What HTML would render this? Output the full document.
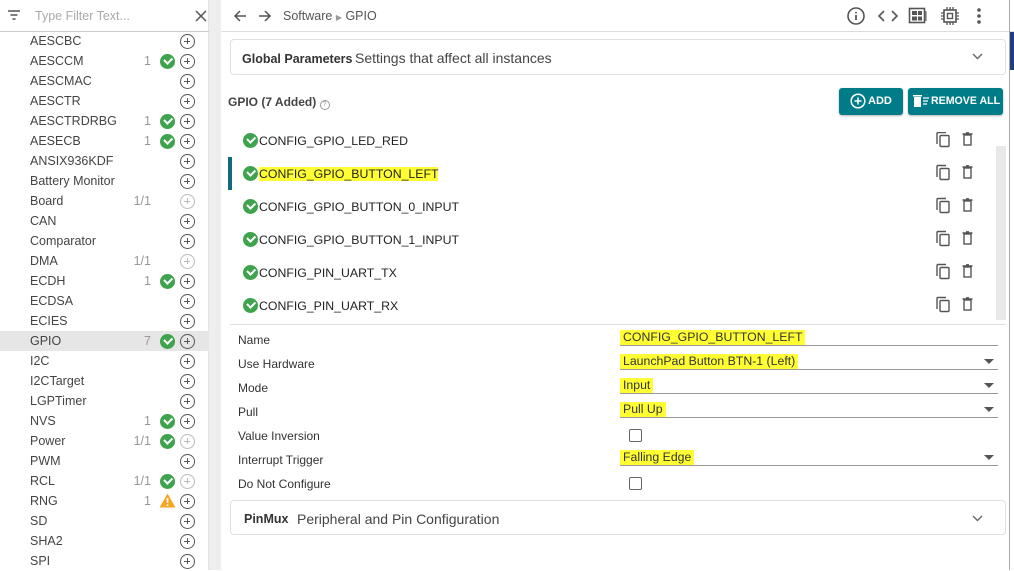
<!DOCTYPE html><html><head><style>
*{margin:0;padding:0;box-sizing:border-box}
body{width:1014px;height:570px;overflow:hidden;background:#fff;font-family:"Liberation Sans",sans-serif;position:relative;color:#333}
.a{position:absolute}
.sb{left:0;top:0;width:209px;height:570px;background:#fff;border-right:1px solid #e2e2e2}
.it{position:absolute;left:0;width:209px;height:20px;font-size:12.5px;color:#444}
.it span.n{position:absolute;left:30px;top:3px}
.it .c{position:absolute;right:58px;top:3px;color:#999;font-size:12.5px}
.ck{position:absolute;left:160px;top:3px;width:15px;height:15px;border-radius:50%;background:#3fa34d}
.ck:after{content:"";position:absolute;left:4px;top:3px;width:6px;height:3.5px;border-left:2px solid #fff;border-bottom:2px solid #fff;transform:rotate(-45deg)}
.pl{position:absolute;left:180px;top:3px;width:15px;height:15px;border-radius:50%;border:1.3px solid #555}
.pl:before{content:"";position:absolute;left:3px;top:5.5px;width:6px;height:1.3px;background:#555}
.pl:after{content:"";position:absolute;left:5.6px;top:3px;width:1.3px;height:6px;background:#555}
.pl.f{border-color:#bbb}.pl.f:before,.pl.f:after{background:#bbb}
.row{position:absolute;left:243px;font-size:12.3px;color:#222;height:16px}
.row .g{position:absolute;left:0;top:0;width:15px;height:15px;border-radius:50%;background:#3fa34d}
.row .g:after{content:"";position:absolute;left:4px;top:3px;width:6px;height:3.5px;border-left:2px solid #fff;border-bottom:2px solid #fff;transform:rotate(-45deg)}
.row .t{position:absolute;left:16px;top:1px;white-space:nowrap}
.hl{background:#ffff33}
.lb{position:absolute;left:238px;font-size:12px;color:#333}
.v{position:absolute;left:620px;width:378px;height:19px;border-bottom:1px solid #999;font-size:12.3px;color:#333}
.v span{background:#ffff33;padding:0 3px;line-height:15px;display:inline-block;margin-top:3px}
.v.d:after{content:"";position:absolute;right:4px;top:8px;border-left:5px solid transparent;border-right:5px solid transparent;border-top:5px solid #555}
.cb{position:absolute;left:629px;width:13px;height:13px;border:1.5px solid #666;border-radius:2px}
.ic{position:absolute}
</style></head><body>
<div class="a sb"></div>
<div class="a" style="left:209px;top:0;width:12px;height:570px;background:#eeeeee"></div>
<div class="a" style="left:0;top:31px;width:209px;height:1px;background:#ccc"></div>
<svg class="ic" style="left:6px;top:8px" width="16" height="14"><path d="M2 3h12M4.5 7h7M6.5 11h3" stroke="#555" stroke-width="1.5"/></svg>
<div class="a" style="left:35px;top:9px;font-size:12.5px;color:#aaa">Type Filter Text...</div>
<svg class="ic" style="left:195px;top:10px" width="12" height="12"><path d="M1 1L11 11M11 1L1 11" stroke="#555" stroke-width="1.5"/></svg>

<div class="it" style="top:31px"><span class="n">AESCBC</span><i class="pl"></i></div>
<div class="it" style="top:51px"><span class="n">AESCCM</span><span class="c">1</span><i class="ck"></i><i class="pl"></i></div>
<div class="it" style="top:71px"><span class="n">AESCMAC</span><i class="pl"></i></div>
<div class="it" style="top:91px"><span class="n">AESCTR</span><i class="pl"></i></div>
<div class="it" style="top:111px"><span class="n">AESCTRDRBG</span><span class="c">1</span><i class="ck"></i><i class="pl"></i></div>
<div class="it" style="top:131px"><span class="n">AESECB</span><span class="c">1</span><i class="ck"></i><i class="pl"></i></div>
<div class="it" style="top:151px"><span class="n">ANSIX936KDF</span><i class="pl"></i></div>
<div class="it" style="top:171px"><span class="n">Battery Monitor</span><i class="pl"></i></div>
<div class="it" style="top:191px"><span class="n">Board</span><span class="c">1/1</span><i class="pl f"></i></div>
<div class="it" style="top:211px"><span class="n">CAN</span><i class="pl"></i></div>
<div class="it" style="top:231px"><span class="n">Comparator</span><i class="pl"></i></div>
<div class="it" style="top:251px"><span class="n">DMA</span><span class="c">1/1</span><i class="pl f"></i></div>
<div class="it" style="top:271px"><span class="n">ECDH</span><span class="c">1</span><i class="ck"></i><i class="pl"></i></div>
<div class="it" style="top:291px"><span class="n">ECDSA</span><i class="pl"></i></div>
<div class="it" style="top:311px"><span class="n">ECIES</span><i class="pl"></i></div>
<div class="it" style="top:331px;background:#e6e6e6"><span class="n">GPIO</span><span class="c">7</span><i class="ck"></i><i class="pl"></i></div>
<div class="it" style="top:351px"><span class="n">I2C</span><i class="pl"></i></div>
<div class="it" style="top:371px"><span class="n">I2CTarget</span><i class="pl"></i></div>
<div class="it" style="top:391px"><span class="n">LGPTimer</span><i class="pl"></i></div>
<div class="it" style="top:411px"><span class="n">NVS</span><span class="c">1</span><i class="ck"></i><i class="pl"></i></div>
<div class="it" style="top:431px"><span class="n">Power</span><span class="c">1/1</span><i class="ck"></i><i class="pl f"></i></div>
<div class="it" style="top:451px"><span class="n">PWM</span><i class="pl"></i></div>
<div class="it" style="top:471px"><span class="n">RCL</span><span class="c">1/1</span><i class="ck"></i><i class="pl f"></i></div>
<div class="it" style="top:491px"><span class="n">RNG</span><span class="c">1</span><svg style="position:absolute;left:159px;top:2px" width="17" height="15"><path d="M8.5 0.5L16.5 14.5H0.5Z" fill="#f5a623"/><path d="M8.5 5v5M8.5 11.5v1.5" stroke="#fff" stroke-width="1.6"/></svg><i class="pl"></i></div>
<div class="it" style="top:511px"><span class="n">SD</span><i class="pl"></i></div>
<div class="it" style="top:531px"><span class="n">SHA2</span><i class="pl"></i></div>
<div class="it" style="top:551px"><span class="n">SPI</span><i class="pl"></i></div>

<!-- top bar -->
<div class="a" style="left:221px;top:31px;width:793px;height:1px;background:#ddd"></div>
<svg class="ic" style="left:233px;top:9px" width="44" height="14"><path d="M13 7H2M7 2L2 7L7 12" stroke="#555" stroke-width="1.5" fill="none"/><path d="M26 7H37M32 2L37 7L32 12" stroke="#555" stroke-width="1.5" fill="none"/></svg>
<div class="a" style="left:283px;top:9px;font-size:12.5px;color:#555">Software <span style="font-size:8px;color:#999">▶</span> GPIO</div>
<svg class="ic" style="left:846px;top:6px" width="20" height="20"><circle cx="10" cy="10" r="8" stroke="#555" stroke-width="1.6" fill="none"/><path d="M10 9v5M10 6v1.5" stroke="#555" stroke-width="1.8"/></svg>
<svg class="ic" style="left:878px;top:9px" width="20" height="14"><path d="M6 2L1 7L6 12M14 2L19 7L14 12" stroke="#555" stroke-width="1.6" fill="none"/></svg>
<svg class="ic" style="left:908px;top:7px" width="20" height="18"><rect x="1.5" y="1.5" width="15" height="14" stroke="#555" stroke-width="1.6" fill="none"/><rect x="4" y="4" width="5" height="4" fill="#555"/><rect x="10" y="4" width="4" height="4" fill="#555"/><rect x="4" y="9.5" width="5" height="4" fill="#555"/><rect x="10" y="9.5" width="4" height="4" fill="#555"/><path d="M18 4v10" stroke="#555"/></svg>
<svg class="ic" style="left:940px;top:6px" width="20" height="20"><rect x="4" y="4" width="12" height="12" stroke="#555" stroke-width="1.6" fill="none"/><rect x="7.5" y="7.5" width="5" height="5" stroke="#555" stroke-width="1.4" fill="none"/><path d="M7 1v3M10 1v3M13 1v3M7 16v3M10 16v3M13 16v3M1 7h3M1 10h3M1 13h3M16 7h3M16 10h3M16 13h3" stroke="#555" stroke-width="1.3"/></svg>
<svg class="ic" style="left:976px;top:7px" width="6" height="18"><circle cx="3" cy="3" r="1.8" fill="#555"/><circle cx="3" cy="9" r="1.8" fill="#555"/><circle cx="3" cy="15" r="1.8" fill="#555"/></svg>
<div class="a" style="left:1009px;top:0;width:1px;height:570px;background:#aaa"></div>
<div class="a" style="left:1010px;top:32px;width:4px;height:38px;background:#1d3f7a"></div>

<!-- global params -->
<div class="a" style="left:230px;top:39px;width:776px;height:36px;border:1px solid #e0e0e0;border-radius:4px"></div>
<div class="a" style="left:242px;top:52px;font-size:12.5px;font-weight:bold;color:#333">Global Parameters</div>
<div class="a" style="left:355px;top:50px;font-size:14px;color:#444">Settings that affect all instances</div>
<svg class="ic" style="left:972px;top:53px" width="11" height="7"><path d="M1 1L5.5 5.5L10 1" stroke="#666" stroke-width="1.4" fill="none"/></svg>

<div class="a" style="left:228px;top:95px;font-size:12px;font-weight:bold;color:#444">GPIO (7 Added) <span style="display:inline-block;width:10px;height:10px;border:1px solid #999;border-radius:50%;font-size:7px;line-height:8px;text-align:center;color:#999;font-weight:normal">?</span></div>
<div class="a" style="left:839px;top:88px;width:64px;height:27px;background:#007c89;border-radius:3px;box-shadow:0 1px 2px rgba(0,0,0,.3)"></div>
<svg class="ic" style="left:850px;top:93px" width="18" height="18"><circle cx="8" cy="8" r="6.8" stroke="#fff" stroke-width="1.5" fill="none"/><path d="M8 4.5v7M4.5 8h7" stroke="#fff" stroke-width="1.5"/></svg>
<div class="a" style="left:868px;top:95px;font-size:11px;font-weight:bold;color:#fff">ADD</div>
<div class="a" style="left:908px;top:88px;width:95px;height:27px;background:#007c89;border-radius:3px;box-shadow:0 1px 2px rgba(0,0,0,.3)"></div>
<svg class="ic" style="left:913px;top:94px" width="18" height="14"><rect x="1" y="3" width="7" height="10" fill="#fff"/><rect x="0" y="1" width="9" height="1.5" fill="#fff"/><path d="M10 4h6M10 7h5M10 10h4" stroke="#fff" stroke-width="1.3"/></svg>
<div class="a" style="left:931px;top:95px;font-size:10.6px;font-weight:bold;color:#fff">REMOVE ALL</div>

<!-- list -->
<div class="a" style="left:228px;top:157px;width:4px;height:33px;background:#0f6b7a"></div>
<div class="row" style="top:133px"><i class="g"></i><span class="t">CONFIG_GPIO_LED_RED</span></div>
<div class="row" style="top:166px"><i class="g"></i><span class="t hl">CONFIG_GPIO_BUTTON_LEFT</span></div>
<div class="row" style="top:199px"><i class="g"></i><span class="t">CONFIG_GPIO_BUTTON_0_INPUT</span></div>
<div class="row" style="top:232px"><i class="g"></i><span class="t">CONFIG_GPIO_BUTTON_1_INPUT</span></div>
<div class="row" style="top:265px"><i class="g"></i><span class="t">CONFIG_PIN_UART_TX</span></div>
<div class="row" style="top:298px"><i class="g"></i><span class="t">CONFIG_PIN_UART_RX</span></div>
<div class="a" style="left:996px;top:146px;width:10px;height:174px;background:#e8e8e8"></div>
<svg class="ic" style="left:936px;top:132px" width="40" height="200">
<g id="r"><rect x="4" y="3.5" width="9" height="11" stroke="#555" stroke-width="1.4" fill="none" rx="1"/><path d="M1 12V1.5A1 1 0 0 1 2 .5h8" stroke="#555" stroke-width="1.4" fill="none"/><rect x="28" y="3" width="7" height="10" stroke="#555" stroke-width="1.4" fill="none"/><path d="M26.5 2h10M30 .8h3" stroke="#555" stroke-width="1.4"/></g>
<use href="#r" y="33"/><use href="#r" y="66"/><use href="#r" y="99"/><use href="#r" y="132"/><use href="#r" y="165"/>
</svg>
<div class="a" style="left:230px;top:324px;width:776px;height:1px;background:#e0e0e0"></div>

<!-- form -->
<div class="lb" style="top:333px">Name</div>
<div class="lb" style="top:357px">Use Hardware</div>
<div class="lb" style="top:381px">Mode</div>
<div class="lb" style="top:405px">Pull</div>
<div class="lb" style="top:429px">Value Inversion</div>
<div class="lb" style="top:453px">Interrupt Trigger</div>
<div class="lb" style="top:477px">Do Not Configure</div>
<div class="v" style="top:327px"><span>CONFIG_GPIO_BUTTON_LEFT</span></div>
<div class="v d" style="top:351px"><span>LaunchPad Button BTN-1 (Left)</span></div>
<div class="v d" style="top:375px"><span>Input</span></div>
<div class="v d" style="top:399px"><span>Pull Up</span></div>
<div class="cb" style="top:429px"></div>
<div class="v d" style="top:447px"><span>Falling Edge</span></div>
<div class="cb" style="top:477px"></div>

<div class="a" style="left:230px;top:500px;width:776px;height:35px;border:1px solid #e0e0e0;border-radius:4px"></div>
<div class="a" style="left:244px;top:512px;font-size:12.5px;font-weight:bold;color:#333">PinMux</div>
<div class="a" style="left:297px;top:511px;font-size:14px;color:#444">Peripheral and Pin Configuration</div>
<svg class="ic" style="left:972px;top:515px" width="11" height="7"><path d="M1 1L5.5 5.5L10 1" stroke="#666" stroke-width="1.4" fill="none"/></svg>
</body></html>
